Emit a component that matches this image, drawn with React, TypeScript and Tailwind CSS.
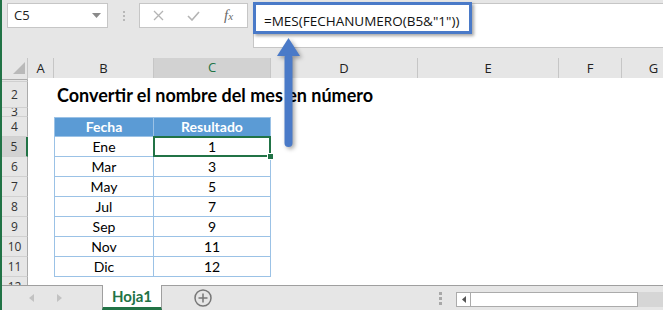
import React from "react";

const HDR = "font-['Open_Sans',sans-serif]";
const CELL = "font-['Lato',sans-serif]";

const gridCols = "grid grid-cols-[26px_26px_100px_117px_147px_141px_63px_64px]";

function RowHeader({ n, sel }: { n?: number; sel?: boolean }) {
  return (
    <div
      className={
        "flex items-center justify-center overflow-hidden text-[12px] leading-none border-b border-b-[#d0d0d0] " +
        HDR +
        (sel
          ? " bg-[#d2d2d2] border-r-2 border-r-[#217346] text-[#333]"
          : " bg-[#e6e6e6] border-r border-r-[#ababab] text-[#333]")
      }
    >
      {n}
    </div>
  );
}

type RowDef = { n: number; h: string; label?: boolean; b?: string; c?: string; head?: boolean; title?: boolean; sel?: boolean };

const rows: RowDef[] = [
  { n: 1, h: "h-[4px]", label: false },
  { n: 2, h: "h-[26px]", title: true },
  { n: 3, h: "h-[9px]" },
  { n: 4, h: "h-[20px]", b: "Fecha", c: "Resultado", head: true },
  { n: 5, h: "h-[20px]", b: "Ene", c: "1", sel: true },
  { n: 6, h: "h-[20px]", b: "Mar", c: "3" },
  { n: 7, h: "h-[20px]", b: "May", c: "5" },
  { n: 8, h: "h-[20px]", b: "Jul", c: "7" },
  { n: 9, h: "h-[20px]", b: "Sep", c: "9" },
  { n: 10, h: "h-[20px]", b: "Nov", c: "11" },
  { n: 11, h: "h-[20px]", b: "Dic", c: "12" },
  { n: 12, h: "h-[20px]" },
];

function SheetRow({ r }: { r: RowDef }) {
  const hasTable = r.b !== undefined;
  const tCell =
    "flex items-center justify-center text-[14px] leading-none border-[#9bc2e6] " +
    CELL +
    (r.head ? " bg-[#5b9bd5] text-white font-bold border-t" : " bg-white text-black");
  return (
    <div className={gridCols + " " + r.h}>
      <RowHeader n={r.label === false ? undefined : r.n} sel={r.sel} />
      <div className="bg-white" />
      {r.title ? (
        <div className="relative bg-white">
          <div className={"absolute left-[3px] top-[4px] whitespace-nowrap text-[18px] font-bold text-black leading-none " + CELL}>
            Convertir el nombre del mes en número
          </div>
        </div>
      ) : hasTable ? (
        <div className={tCell + " border-l border-r border-b"}>{r.b}</div>
      ) : (
        <div className="bg-white" />
      )}
      {hasTable ? (
        <div className={tCell + " border-r border-b relative"}>
          {r.c}
          {r.sel && (
            <>
              <div className="absolute -left-[1px] -top-[1px] -right-[1px] -bottom-[1px] border-2 border-[#217346]" />
              <div className="absolute -right-[4px] -bottom-[4px] w-[7px] h-[7px] bg-[#217346] border border-white z-10" />
            </>
          )}
        </div>
      ) : (
        <div className="bg-white" />
      )}
      <div className="bg-white" />
      <div className="bg-white" />
      <div className="bg-white" />
      <div className="bg-white" />
    </div>
  );
}

export default function App() {
  return (
    <div className="relative w-[663px] h-[310px] overflow-hidden bg-white border-l-2 border-l-[#217346] flex flex-col">
      {/* Formula bar area */}
      <div className="h-[58px] bg-[#e6e6e6] flex items-start pt-[3px] shrink-0">
        <div className="ml-[5px] w-[101px] h-[25px] bg-white border border-[#c6c6c6] flex items-center justify-between pl-[6px] pr-[6px]">
          <span className={"text-[13px] text-[#222] " + HDR}>C5</span>
          <svg width="9" height="5" viewBox="0 0 9 5">
            <path d="M0 0 L9 0 L4.5 5 Z" fill="#8a8a8a" />
          </svg>
        </div>
        <div className="w-[31px] h-[25px] flex flex-col items-center justify-center gap-[2px]">
          <div className="w-[2px] h-[2px] bg-[#b8b8b8]" />
          <div className="w-[2px] h-[2px] bg-[#b8b8b8]" />
          <div className="w-[2px] h-[2px] bg-[#b8b8b8]" />
        </div>
        <div className="w-[109px] h-[25px] bg-white border border-[#c6c6c6] flex items-center pl-[1px]">
          <div className="w-[35px] flex justify-center">
            <svg width="11" height="11" viewBox="0 0 11 11">
              <path d="M1 1 L10 10 M10 1 L1 10" stroke="#b4b4b4" strokeWidth="1.3" />
            </svg>
          </div>
          <div className="w-[35px] flex justify-center">
            <svg width="13" height="10" viewBox="0 0 13 10">
              <path d="M1 5 L5 9 L12 1" stroke="#b4b4b4" strokeWidth="1.6" fill="none" />
            </svg>
          </div>
          <div className="w-[35px] flex justify-center">
            <span className="font-['Liberation_Serif',serif] italic text-[15px] text-[#6a6a6a] leading-none">
              f<span className="text-[11px]">x</span>
            </span>
          </div>
        </div>
        <div className="ml-[5px] flex-1 h-[45px] bg-white border border-r-0 border-[#c6c6c6] pl-[10px] pt-[4px]">
          <span className={"text-[13.5px] text-[#111] leading-none whitespace-nowrap " + HDR}>
            =MES(FECHANUMERO(B5&amp;"1"))
          </span>
        </div>
      </div>

      {/* Column headers */}
      <div className={gridCols + " h-[20px] shrink-0 bg-[#e6e6e6] " + HDR}>
        <div className="relative border-r border-r-[#c6c6c6] border-b border-b-[#ababab]">
          <svg className="absolute left-[11px] top-[4px]" width="12" height="12" viewBox="0 0 12 12">
            <path d="M12 0 L12 12 L0 12 Z" fill="#b9b9b9" />
          </svg>
        </div>
        {["A", "B", "C", "D", "E", "F", "G"].map((l) =>
          l === "C" ? (
            <div
              key={l}
              className="flex items-center justify-center text-[13px] text-[#217346] bg-[#d2d2d2] border-r border-r-[#c6c6c6] border-b-2 border-b-[#217346]"
            >
              {l}
            </div>
          ) : (
            <div
              key={l}
              className="flex items-center justify-center text-[13px] text-[#222] border-r border-r-[#c6c6c6] border-b border-b-[#ababab]"
            >
              {l}
            </div>
          )
        )}
      </div>

      {/* Sheet */}
      <div className="h-[207px] overflow-hidden shrink-0">
        {rows.map((r) => (
          <SheetRow key={r.n} r={r} />
        ))}
      </div>

      {/* Sheet tab bar */}
      <div className="h-[25px] bg-[#e6e6e6] border-t border-t-[#9f9f9f] flex items-stretch shrink-0">
        <div className="w-[100px] flex items-center">
          <svg className="ml-[27px]" width="5" height="8" viewBox="0 0 5 8">
            <path d="M5 0 L0 4 L5 8 Z" fill="#c2c2c2" />
          </svg>
          <svg className="ml-[23px]" width="5" height="8" viewBox="0 0 5 8">
            <path d="M0 0 L5 4 L0 8 Z" fill="#c2c2c2" />
          </svg>
        </div>
        <div className="w-[60px] -mt-[1px] bg-white border-l border-r border-[#9f9f9f] border-b-[3px] border-b-[#217346] flex items-center justify-center">
          <span className={"text-[15px] font-bold text-[#217346] leading-none " + CELL}>Hoja1</span>
        </div>
        <div className="w-[82px] flex items-center justify-center">
          <svg width="18" height="18" viewBox="0 0 18 18">
            <circle cx="9" cy="9" r="8" stroke="#777" strokeWidth="1.5" fill="none" />
            <path d="M9 4.5 V13.5 M4.5 9 H13.5" stroke="#777" strokeWidth="1.5" />
          </svg>
        </div>
        <div className="w-[195px]" />
        <div className="w-[3px] flex flex-col justify-center gap-[2px]">
          <div className="w-[3px] h-[3px] bg-[#a8a8a8]" />
          <div className="w-[3px] h-[3px] bg-[#a8a8a8]" />
          <div className="w-[3px] h-[3px] bg-[#a8a8a8]" />
        </div>
        <div className="w-[14px]" />
        <div className="w-[182px] pt-[6px]">
          <div className="h-[15px] bg-white border border-[#ababab] flex">
            <div className="w-[14px] border-r border-r-[#ababab] flex items-center justify-center">
              <svg width="4" height="7" viewBox="0 0 4 7">
                <path d="M4 0 L0 3.5 L4 7 Z" fill="#555" />
              </svg>
            </div>
          </div>
        </div>
        <div className="w-[25px] pt-[6px]">
          <div className="h-[15px] bg-[#d6d6d6]" />
        </div>
      </div>

      {/* Annotation: highlight box around formula */}
      <div className="absolute left-[251px] top-[2px] w-[219px] h-[32px] border-[3px] border-[#4a7ac8] shadow-[2px_2px_3px_rgba(0,0,0,0.35)]" />

      {/* Annotation: arrow */}
      <svg
        className="absolute left-[268px] top-[34px] drop-shadow-[2px_2px_2px_rgba(0,0,0,0.35)]"
        width="36"
        height="118"
        viewBox="0 0 36 118"
      >
        <path d="M18.5 4 L30 22 L7 22 Z" fill="#4a7ac8" />
        <rect x="14.5" y="20" width="8" height="93" rx="4" fill="#4a7ac8" />
      </svg>
    </div>
  );
}
